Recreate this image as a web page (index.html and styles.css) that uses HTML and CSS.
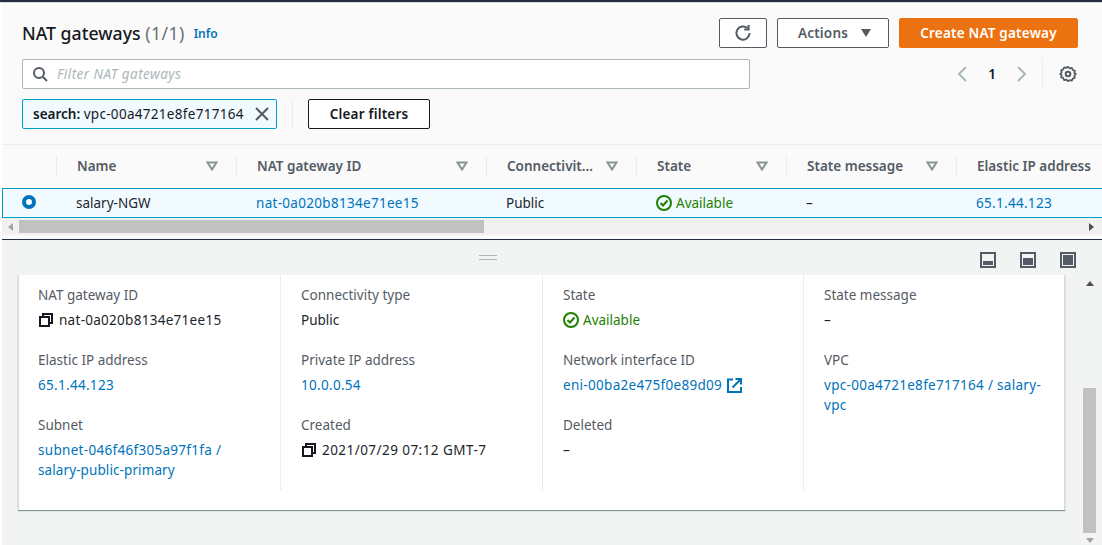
FILE: index.html
```html
<!DOCTYPE html>
<html lang="en">
<head>
<meta charset="utf-8">
<title>NAT gateways</title>
<link rel="stylesheet" href="styles.css">
</head>
<body>
<div class="topline"></div>
<main class="main">
  <section class="head">
    <div class="title-row">
      <h1 class="title">NAT gateways <span class="count">(1/1)</span></h1>
      <a class="info">Info</a>
      <div class="actions">
        <button class="btn btn-icon"><svg width="18" height="18" viewBox="0 0 18 18" fill="none" stroke="#545b64" stroke-width="2"><path d="M15.6 9a6.6 6.6 0 1 1-2.2-4.9"/><path d="M14.6 1v4.4h-4.4" /></svg></button>
        <button class="btn btn-actions">Actions <svg width="14" height="10" viewBox="0 0 14 10"><path d="M2 1h10L7 9z" fill="#545b64"/></svg></button>
        <button class="btn btn-primary">Create NAT gateway</button>
      </div>
    </div>
    <div class="filter-row">
      <div class="search">
        <svg width="16" height="16" viewBox="0 0 16 16" fill="none" stroke="#545b64" stroke-width="2"><circle cx="7" cy="7" r="5"/><path d="M11 11l4 4"/></svg>
        <span class="placeholder">Filter NAT gateways</span>
      </div>
      <div class="pager">
        <svg width="12" height="18" viewBox="0 0 12 18" fill="none" stroke="#aab7b8" stroke-width="2"><path d="M10 2L3 9l7 7"/></svg>
        <span class="page-num">1</span>
        <svg width="12" height="18" viewBox="0 0 12 18" fill="none" stroke="#aab7b8" stroke-width="2"><path d="M2 2l7 7-7 7"/></svg>
        <span class="pager-sep"></span>
        <svg class="gear" width="18" height="18" viewBox="0 0 18 18" fill="none" stroke="#545b64" stroke-width="2"><path d="M9 1.8l1.600 1.500 2.200-.4 1 2 2 1-.4 2.100L16.800 9l-1.400 1.500.4 2.100-2 1-1 2-2.200-.4L9 16.200l-1.600-1.500-2.200.4-1-2-2-1 .4-2.100L1.200 9l1.400-1.500-.4-2.100 2-1 1-2 2.200.4z" stroke-linejoin="round" stroke-width="1.800"/><circle cx="9" cy="9" r="2.300"/></svg>
      </div>
    </div>
    <div class="token-row">
      <div class="token"><span class="token-text"><b>search:</b> <span class="token-value">vpc-00a4721e8fe717164</span></span>
        <svg width="16" height="16" viewBox="0 0 16 16" fill="none" stroke="#545b64" stroke-width="2"><path d="M2 2l12 12M14 2L2 14"/></svg>
      </div>
      <span class="token-sep"></span>
      <button class="btn btn-clear">Clear filters</button>
    </div>
  </section>

  <section class="table">
    <div class="tr thead">
      <div class="th th-radio"></div>
      <div class="th"><span class="th-label">Name</span><svg class="sort" width="12" height="10" viewBox="0 0 12 10"><path d="M1.500 1.500h9L6 8.500z" fill="none" stroke="#879596" stroke-width="2"/></svg></div>
      <div class="th"><span class="th-label">NAT gateway ID</span><svg class="sort" width="12" height="10" viewBox="0 0 12 10"><path d="M1.500 1.500h9L6 8.500z" fill="none" stroke="#879596" stroke-width="2"/></svg></div>
      <div class="th"><span class="th-label">Connectivit…</span><svg class="sort" width="12" height="10" viewBox="0 0 12 10"><path d="M1.500 1.500h9L6 8.500z" fill="none" stroke="#879596" stroke-width="2"/></svg></div>
      <div class="th"><span class="th-label">State</span><svg class="sort" width="12" height="10" viewBox="0 0 12 10"><path d="M1.500 1.500h9L6 8.500z" fill="none" stroke="#879596" stroke-width="2"/></svg></div>
      <div class="th"><span class="th-label">State message</span><svg class="sort" width="12" height="10" viewBox="0 0 12 10"><path d="M1.500 1.500h9L6 8.500z" fill="none" stroke="#879596" stroke-width="2"/></svg></div>
      <div class="th th-last"><span class="th-label">Elastic IP address</span></div>
    </div>
    <div class="tr tbody">
      <div class="td td-radio"><span class="radio"></span></div>
      <div class="td">salary-NGW</div>
      <div class="td"><a class="link">nat-0a020b8134e71ee15</a></div>
      <div class="td">Public</div>
      <div class="td status"><svg width="16" height="16" viewBox="0 0 16 16" fill="none" stroke="#1d8102" stroke-width="2"><circle cx="8" cy="8" r="7"/><path d="M4.500 8l2.500 2.500 4.500-5"/></svg>Available</div>
      <div class="td">–</div>
      <div class="td"><a class="link">65.1.44.123</a></div>
    </div>
  </section>
  <div class="hscroll">
    <svg class="arrow" width="6" height="8" viewBox="0 0 6 8"><path d="M5 0v8L0 4z" fill="#a3a3a3"/></svg>
    <span class="hthumb"></span>
    <svg class="arrow arrow-end" width="6" height="8" viewBox="0 0 6 8"><path d="M1 0v8l5-4z" fill="#505050"/></svg>
  </div>

  <section class="split">
    <div class="split-bar">
      <span class="handle"></span>
      <div class="split-icons">
        <svg width="16" height="16" viewBox="0 0 16 16"><rect x="1" y="1" width="14" height="14" fill="none" stroke="#545b64" stroke-width="2"/><rect x="3" y="9" width="10" height="4" fill="#545b64"/></svg>
        <svg width="16" height="16" viewBox="0 0 16 16"><rect x="1" y="1" width="14" height="14" fill="none" stroke="#545b64" stroke-width="2"/><rect x="3" y="6" width="10" height="7" fill="#545b64"/></svg>
        <svg width="16" height="16" viewBox="0 0 16 16"><rect x="1" y="1" width="14" height="14" fill="none" stroke="#545b64" stroke-width="2"/><rect x="3" y="3" width="10" height="10" fill="#545b64"/></svg>
      </div>
    </div>
    <div class="split-body">
      <div class="split-content">
        <div class="card">
          <div class="col">
            <div class="field"><div class="label">NAT gateway ID</div><div class="value copy"><svg class="copy-icon" width="14" height="14" viewBox="0 0 14 14" fill="none" stroke="#16191f" stroke-width="2"><rect x="1" y="4" width="9" height="9"/><path d="M4 3V1h9v9h-2"/></svg>nat-0a020b8134e71ee15</div></div>
            <div class="field"><div class="label">Elastic IP address</div><div class="value"><a class="link">65.1.44.123</a></div></div>
            <div class="field"><div class="label">Subnet</div><div class="value"><a class="link">subnet-046f46f305a97f1fa / <span class="link-name">salary-public-primary</span></a></div></div>
          </div>
          <div class="col">
            <div class="field"><div class="label">Connectivity type</div><div class="value">Public</div></div>
            <div class="field"><div class="label">Private IP address</div><div class="value"><a class="link">10.0.0.54</a></div></div>
            <div class="field"><div class="label">Created</div><div class="value copy date"><svg class="copy-icon" width="14" height="14" viewBox="0 0 14 14" fill="none" stroke="#16191f" stroke-width="2"><rect x="1" y="4" width="9" height="9"/><path d="M4 3V1h9v9h-2"/></svg>2021/07/29 07:12 GMT-7</div></div>
          </div>
          <div class="col">
            <div class="field"><div class="label">State</div><div class="value status"><svg width="16" height="16" viewBox="0 0 16 16" fill="none" stroke="#1d8102" stroke-width="2"><circle cx="8" cy="8" r="7"/><path d="M4.500 8l2.500 2.500 4.500-5"/></svg>Available</div></div>
            <div class="field"><div class="label">Network interface ID</div><div class="value eni"><a class="link">eni-00ba2e475f0e89d09</a><svg width="15" height="15" viewBox="0 0 15 15" fill="none" stroke="#0073bb" stroke-width="2"><path d="M6 1.500H1v12.500h13V9"/><path d="M5.500 9.500L13 2M8.500 1H14v5.500"/></svg></div></div>
            <div class="field"><div class="label">Deleted</div><div class="value">–</div></div>
          </div>
          <div class="col">
            <div class="field"><div class="label">State message</div><div class="value">–</div></div>
            <div class="field"><div class="label">VPC</div><div class="value"><a class="link">vpc-00a4721e8fe717164 / salary-vpc</a></div></div>
          </div>
        </div>
      </div>
      <div class="vscroll">
        <svg class="varrow" width="8" height="6" viewBox="0 0 8 6"><path d="M0 5h8L4 0z" fill="#505050"/></svg>
        <span class="vspace"></span>
        <span class="vthumb"></span>
        <svg class="varrow" width="8" height="6" viewBox="0 0 8 6"><path d="M0 1h8L4 6z" fill="#a3a3a3"/></svg>
      </div>
    </div>
  </section>
</main>
</body>
</html>
```
FILE: styles.css
```css
* { box-sizing: border-box; }
html, body { margin: 0; height: 100%; }
body {
  width: 1102px;
  height: 545px;
  overflow: hidden;
  background: #fff;
  color: #16191f;
  font-family: "Noto Sans", "Liberation Sans", sans-serif;
  font-size: 13.5px;
  line-height: 20px;
  display: flex;
  flex-direction: column;
}
.topline { height: 3px; flex: none; background: linear-gradient(#232f3e 2px, #d5dbdb 2px); }
.main { flex: 1; margin-left: 2px; display: flex; flex-direction: column; min-height: 0; background: #fafafa; }
.head { height: 142px; flex: none; padding: 15px 24px 0 20px; border-bottom: 1px solid #eaeded; }
.title-row { display: flex; align-items: center; height: 30px; }
.title { margin: 0; font-size: 17.7px; font-weight: 500; line-height: 30px; color: #16191f; }
.count { font-weight: 400; color: #687078; letter-spacing: .4px; }
.info { margin-left: 9px; font-size: 12px; font-weight: 600; color: #0073bb; position: relative; top: 1px; }
.actions { margin-left: auto; display: flex; gap: 10px; }
.btn {
  height: 30px; border: 1px solid #545b64; border-radius: 2px; background: #fff;
  font: 600 13.5px/20px "Noto Sans", "Liberation Sans", sans-serif; letter-spacing: .2px; color: #545b64; padding: 0; display: flex; align-items: center; justify-content: center;
}
.btn-icon { width: 48px; }
.btn-actions { width: 112px; gap: 11px; padding-left: 5px; }
.btn-primary { width: 179px; background: #ec7211; border-color: #ec7211; color: #fff; }
.filter-row { display: flex; align-items: center; margin-top: 11px; height: 30px; }
.search {
  width: 728px; height: 30px; background: #fff; border: 1px solid #aab7b8; border-radius: 2px;
  display: flex; align-items: center; gap: 9px; padding-left: 9px;
}
.placeholder { font-style: italic; color: #aab7b8; letter-spacing: .42px; }
.pager { margin-left: auto; display: flex; align-items: center; height: 30px; }
.page-num { width: 48px; text-align: center; font-weight: 600; }
.pager-sep { width: 1px; height: 30px; background: #eaeded; margin: 0 16px 0 14px; }
.gear { margin-right: 1px; }
.token-row { display: flex; align-items: center; margin-top: 10px; height: 30px; }
.token {
  width: 255px; height: 30px; display: flex; align-items: center; justify-content: space-between;
  padding: 0 6px 0 10px; border: 1px solid #00a1c9; border-radius: 2px; background: #f1faff;
}
.token-text { white-space: nowrap; color: #16191f; }
.token-text b { font-weight: 600; }
.token-value { letter-spacing: .3px; }
.token-sep { width: 1px; height: 30px; background: #eaeded; margin: 0 15px; }
.btn-clear { width: 122px; border-color: #16191f; color: #16191f; }
.table { flex: none; overflow: hidden; }
.tr { display: grid; grid-template-columns: 54px 180px 250px 150px 150px 170px 146px; }
.thead { height: 43px; align-items: center; padding: 0 0 2px 1px; }
.th {
  height: 20px; display: flex; align-items: center; justify-content: space-between;
  padding: 0 18px 0 20px; border-right: 1px solid #eaeded;
  font-weight: 600; color: #545b64; white-space: nowrap;
}
.th-radio { padding: 0; }
.th-last { border-right: 0; padding-right: 0; }
.tbody { height: 30px; align-items: center; background: #f1faff; border-top: 1px solid #00a1c9; border-bottom: 1px solid #00a1c9; border-left: 1px solid #00a1c9; }
.td { padding-left: 19px; white-space: nowrap; color: #22262c; }
.td-radio { padding-left: 19px; display: flex; }
.radio { width: 14px; height: 14px; margin-top: -2px; border-radius: 50%; border: 4.500px solid #0073bb; background: #fff; }
.link { color: #0073bb; letter-spacing: .3px; }
.link-name { letter-spacing: .1px; }
.status { display: flex; align-items: center; gap: 4px; }
.td.status, .value.status { color: #1d8102; }
.hscroll { height: 21px; flex: none; display: flex; align-items: center; background: #f1f1f1; padding: 0 8px 4px 6px; gap: 5px; box-shadow: inset 0 -4px 0 #fafafa; }
.hthumb { width: 465px; height: 13px; background: #c1c1c1; }
.arrow-end { margin-left: auto; }
.split { flex: 1; min-height: 0; display: flex; flex-direction: column; background: #f2f3f3; border-top: 1px solid #232f3e; }
.split-bar { height: 35px; flex: none; display: flex; align-items: center; padding: 0 26px 0 477px; }
.handle { width: 18px; height: 5px; border-top: 1px solid #aab7b8; border-bottom: 1px solid #aab7b8; }
.split-icons { margin-left: auto; display: flex; gap: 24px; margin-top: 5px; }
.split-body { flex: 1; min-height: 0; display: flex; }
.split-content { width: 1081px; padding-left: 16px; }
.card {
  width: 1047px; display: grid; grid-template-columns: 262px 262px 261px 261px; background: #fff; padding-bottom: 20px;
  border-left: 1px solid #d5dbdb; border-right: 1px solid #d5dbdb; box-shadow: 0 1px 1px 0 #879596;
}
.col { padding: 10px 20px 0 20px; height: 215px; border-right: 1px solid #eaeded; }
.col:first-child { padding-left: 19px; }
.col:last-child { border-right: 0; }
.field { margin-bottom: 20px; }
.label { color: #545b64; margin-bottom: 5px; }
.value { color: #22262c; }
.copy { display: flex; align-items: center; gap: 6px; letter-spacing: .28px; }
.date { letter-spacing: .45px; }
.copy-icon { flex: none; margin-left: 1px; }
.eni { display: flex; align-items: center; gap: 5px; }
.vscroll { width: 19px; display: flex; flex-direction: column; align-items: center; padding: 6px 0 2px; }
.vspace { flex: 1; }
.vthumb { width: 13px; height: 145px; background: #c1c1c1; margin: 0 6px 4px 0; }
.varrow { flex: none; margin-right: 6px; }
```
